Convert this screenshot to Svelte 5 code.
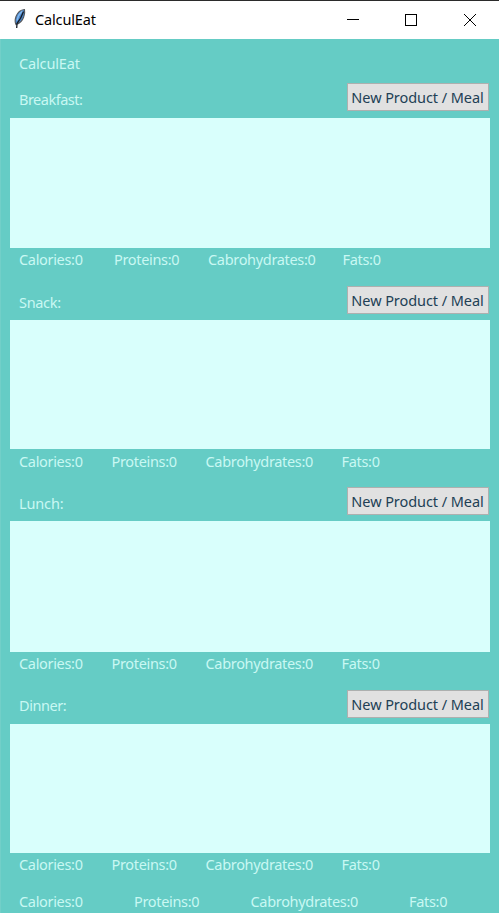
<script>
  const nutrients = ['Calories', 'Proteins', 'Cabrohydrates', 'Fats'];
  const meals = [
    { name: 'Breakfast', rows: [35, 130, 38], cols: [95, 94, 134.5, 60] },
    { name: 'Snack', rows: [34, 129, 38], cols: [92.5, 94, 136, 60] },
    { name: 'Lunch', rows: [34, 131, 38], cols: [92.5, 94, 136, 60] },
    { name: 'Dinner', rows: [34, 129, 36], cols: [92.5, 94, 136, 60] }
  ];
  const dayCols = [115, 116.5, 158.5, 60];
  const px = (list) => list.map((n) => `${n}px`).join(' ');
</script>

{#snippet totals(cols)}
  <div class="totals" style="grid-template-columns: {px(cols)}">
    {#each nutrients as nutrient}
      <span>{nutrient}:0</span>
    {/each}
  </div>
{/snippet}

<div class="window">
  <header>
    <svg class="feather" width="16" height="22" viewBox="0 0 16 22">
      <path d="M12.5 1.5 C9 1.800 5.500 4.500 4 8.500 C2.800 12 2.900 14.500 4 16.500 C7.500 15.500 10.500 12.500 11.700 9 C12.700 6.500 13 4 12.500 1.500Z" fill="#4a86cc" stroke="#55585c" stroke-width="1.100" />
      <path d="M10.500 3.200 C7.500 5.500 5.800 8.500 5.200 12.500" fill="none" stroke="#83b8ef" stroke-width="1.600" />
      <path d="M11.500 3.500 C10 8 7.500 12.500 5 15.500 L4.700 20" fill="none" stroke="#151b24" stroke-width="1.300" />
    </svg>
    <h1>CalculEat</h1>
    <svg class="controls" width="160" height="38" viewBox="0 0 160 38" fill="none" stroke="#000" shape-rendering="crispEdges">
      <path d="M8 18.500H20" />
      <path d="M66.500 13.500H77.500V24.500H66.500Z" />
      <path d="M125 13L137 25M137 13L125 25" shape-rendering="auto" />
    </svg>
  </header>
  <main>
    <div class="title">CalculEat</div>
    {#each meals as meal}
      <section class={meal.name.toLowerCase()} style="grid-template-rows: {px(meal.rows)}">
        <div class="head">
          <span class="label">{meal.name}:</span>
          <button>New Product / Meal</button>
        </div>
        <div class="list"></div>
        {@render totals(meal.cols)}
      </section>
    {/each}
    <div class="day">{@render totals(dayCols)}</div>
  </main>
</div>

<style>
  .window {
    width: 499px;
    height: 913px;
    overflow: hidden;
    box-sizing: border-box;
    display: flex;
    flex-direction: column;
    border-top: 1px solid #2b2b2b;
    background: #fff;
    font: 14.5px/20px "Noto Sans", "Open Sans", sans-serif;
    letter-spacing: -0.32px;
    white-space: nowrap;
  }
  header {
    height: 38px;
    flex: none;
    display: flex;
    align-items: center;
  }
  .feather {
    margin: 0 0 2px 12px;
  }
  h1 {
    margin: 0 auto 2px 7px;
    font: inherit;
    letter-spacing: -0.15px;
    color: #000;
  }
  .controls {
    margin-right: 0;
  }
  main {
    flex: 1;
    min-height: 0;
    box-sizing: border-box;
    padding: 0 9px;
    border-left: 1px solid #72cfc8;
    background: #65ccc5;
    color: #c9f8f3;
  }
  .title {
    height: 44px;
    box-sizing: border-box;
    padding: 14px 0 0 9px;
    letter-spacing: -0.15px;
  }
  section {
    display: grid;
  }
  .head {
    display: flex;
    justify-content: space-between;
    align-items: flex-start;
    padding: 0 1.5px 0 9px;
  }
  .label {
    margin-top: 6px;
  }
  .breakfast .label {
    letter-spacing: -0.5px;
  }
  .lunch .label {
    letter-spacing: -0.15px;
  }
  .dinner .label {
    margin-top: 5px;
    letter-spacing: -0.45px;
  }
  button {
    width: 142px;
    height: 28px;
    box-sizing: border-box;
    padding: 0;
    border: 1px solid #adb0af;
    background: #e1e1e1;
    color: #213f55;
    font: inherit;
    letter-spacing: -0.07px;
  }
  .list {
    background: #d9fffc;
  }
  .totals {
    display: grid;
    align-content: start;
    padding: 1px 0 0 9px;
  }
  .snack .totals,
  .day .totals {
    padding-top: 2px;
  }
</style>
